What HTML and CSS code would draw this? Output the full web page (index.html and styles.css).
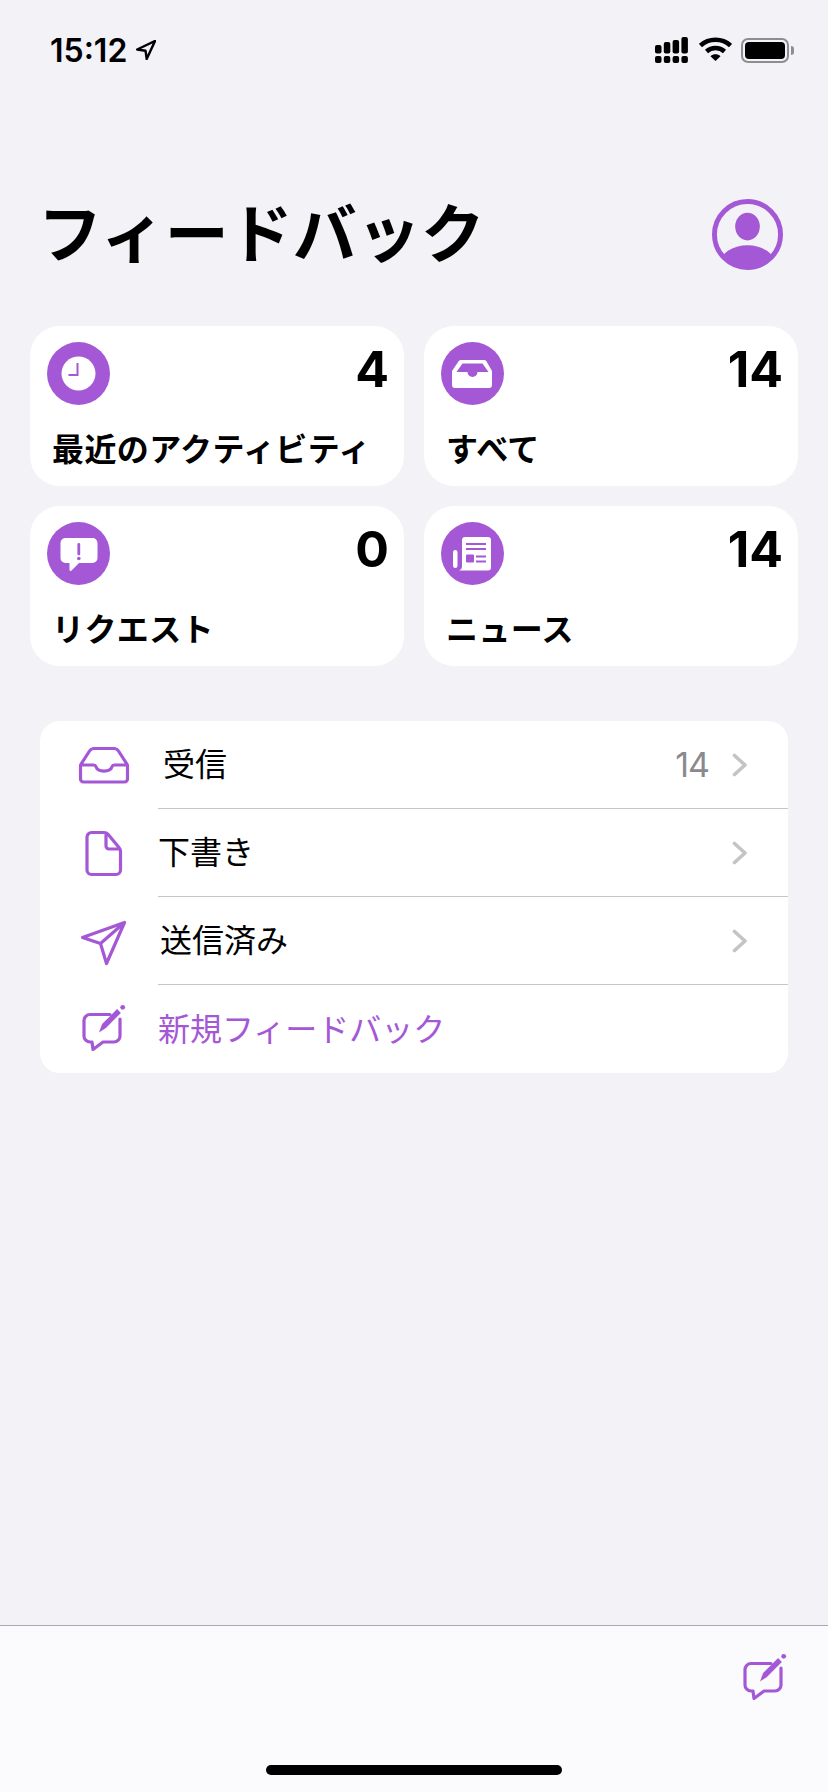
FILE: index.html
```html
<!DOCTYPE html>
<html lang="ja">
<head>
    <meta charset="UTF-8">
    <meta name="viewport" content="width=device-width, initial-scale=1.0">
    <title>フィードバック</title>
    <link rel="stylesheet" href="styles.css">
</head>
<body>
<div class="pantalla">

    <!-- Barra de estado -->
    <div class="estado">
        <div class="estado-hora">
            <span>15:12</span>
            <svg class="flecha" width="20" height="20" viewBox="0 0 20 20"><path d="M19 1 1.200 9.500l8.300 1.200 1.200 8.300z" fill="none" stroke="#000" stroke-width="2.400" stroke-linejoin="round"/></svg>
        </div>
        <div class="estado-iconos">
            <svg width="33" height="26" viewBox="0 0 33 26">
                <rect x="0" y="8" width="6.500" height="8.500" rx="2"/><rect x="8.800" y="5" width="6.500" height="11.500" rx="2"/><rect x="17.600" y="3" width="6.500" height="13.500" rx="2"/><rect x="26.400" y="0" width="6.500" height="16.500" rx="2"/>
                <rect x="0" y="19" width="6.500" height="7" rx="2"/><rect x="8.800" y="19" width="6.500" height="7" rx="2"/><rect x="17.600" y="19" width="6.500" height="7" rx="2"/><rect x="26.400" y="19" width="6.500" height="7" rx="2"/>
            </svg>
            <svg class="wifi" width="33" height="24" viewBox="0 0 33 24">
                <path d="M1.500 8.500C9.800.8 23.200.8 31.500 8.500" fill="none" stroke="#000" stroke-width="4.500"/>
                <path d="M7.500 14.500c5-4.600 13-4.600 18 0" fill="none" stroke="#000" stroke-width="4.500"/>
                <path d="M11.500 19.200c2.900-2.600 7.100-2.600 10 0l-5 4.800z"/>
            </svg>
            <div class="bateria"><div class="bateria-carga"></div></div>
            <div class="bateria-punta"></div>
        </div>
    </div>

    <!-- Encabezado -->
    <div class="cabecera">
        <h1>フィードバック</h1>
        <svg class="avatar" width="71" height="71" viewBox="0 0 72 72">
            <defs><clipPath id="recorte"><circle cx="36" cy="36" r="34"/></clipPath></defs>
            <circle cx="36" cy="36" r="33.500" fill="none" stroke="#a458d6" stroke-width="5"/>
            <ellipse cx="36" cy="28" rx="12.500" ry="14" fill="#a458d6"/>
            <ellipse cx="36" cy="66" rx="28" ry="19" fill="#a458d6" clip-path="url(#recorte)"/>
        </svg>
    </div>

    <!-- Tarjetas de resumen -->
    <div class="tarjetas">
        <div class="tarjeta">
            <div class="tarjeta-fila">
                <svg class="circulo" viewBox="0 0 63 63">
                    <circle cx="31.500" cy="31.500" r="31.500" fill="#a458d6"/>
                    <circle cx="31.500" cy="31.500" r="17" fill="#fff"/>
                    <path d="M30.500 21v12h-9" fill="none" stroke="#a458d6" stroke-width="2"/>
                </svg>
                <span class="numero">4</span>
            </div>
            <div class="tarjeta-texto">最近のアクティビティ</div>
        </div>
        <div class="tarjeta">
            <div class="tarjeta-fila">
                <svg class="circulo" viewBox="0 0 63 63">
                    <circle cx="31.500" cy="31.500" r="31.500" fill="#a458d6"/>
                    <path d="M20 18h23a3 3 0 0 1 2.400 1.200L51 29v14a3 3 0 0 1-3 3H14a3 3 0 0 1-3-3V29l6.600-9.800A3 3 0 0 1 20 18z" fill="#fff"/>
                    <path d="M21.500 21.500h20l6 8.500H36.500a5 5 0 0 1-10 0H15.500z" fill="#a458d6"/>
                </svg>
                <span class="numero">14</span>
            </div>
            <div class="tarjeta-texto">すべて</div>
        </div>
        <div class="tarjeta">
            <div class="tarjeta-fila">
                <svg class="circulo" viewBox="0 0 63 63">
                    <circle cx="31.500" cy="31.500" r="31.500" fill="#a458d6"/>
                    <path d="M18.500 16h27a5 5 0 0 1 5 5v15a5 5 0 0 1-5 5H32l-7.500 7.500c-1 1-2 .5-2-1V41h-4a5 5 0 0 1-5-5V21a5 5 0 0 1 5-5z" fill="#fff"/>
                    <path d="M31.800 22.500v9.500" stroke="#a458d6" stroke-width="2.800" stroke-linecap="round"/>
                    <circle cx="31.800" cy="36.500" r="1.800" fill="#a458d6"/>
                </svg>
                <span class="numero">0</span>
            </div>
            <div class="tarjeta-texto">リクエスト</div>
        </div>
        <div class="tarjeta">
            <div class="tarjeta-fila">
                <svg class="circulo" viewBox="0 0 63 63">
                    <circle cx="31.500" cy="31.500" r="31.500" fill="#a458d6"/>
                    <path d="M21 18a3 3 0 0 1 3-3h23a3 3 0 0 1 3 3v27.500a3 3 0 0 1-3 3H18c2-1 3-2 3-4z" fill="#fff"/>
                    <rect x="12" y="28" width="4.500" height="18" rx="2.200" fill="#fff"/>
                    <path d="M25 22h20M25 27h20M35 34.500h10M35 39.500h10" stroke="#a458d6" stroke-width="2"/>
                    <rect x="25" y="32.500" width="8" height="8" rx="1" fill="#a458d6"/>
                </svg>
                <span class="numero">14</span>
            </div>
            <div class="tarjeta-texto">ニュース</div>
        </div>
    </div>

    <!-- Lista de buzones -->
    <div class="lista">
        <div class="fila">
            <div class="fila-icono">
                <svg width="56" height="56" viewBox="0 0 56 56" class="trazo">
                    <path d="M4.500 28H18c1 0 1.600.7 2 1.800a8.200 5.500 0 0 0 16 0c.4-1.100 1-1.800 2-1.800h13.500M4.500 28v14a3 3 0 0 0 3 3h41a3 3 0 0 0 3-3V28l-9-14a5 5 0 0 0-4-2.500H17.500a5 5 0 0 0-4 2.500z"/>
                </svg>
            </div>
            <div class="fila-cuerpo">
                <span class="fila-texto fila-texto-recibido">受信</span>
                <span class="fila-cuenta">14</span>
                <svg class="chevron" width="16" height="24" viewBox="0 0 16 24"><path d="M2.500 2.500 13 12 2.500 21.500" fill="none" stroke="#c4c4c7" stroke-width="3.600" stroke-linecap="round" stroke-linejoin="round"/></svg>
            </div>
        </div>
        <div class="fila">
            <div class="fila-icono">
                <svg width="56" height="56" viewBox="0 0 56 56" class="trazo">
                    <path d="M15.500 7.500H28c2 0 3 .6 4 1.800l11 13.200c1 1.200 1.500 2.200 1.500 4V45a4.500 4.500 0 0 1-4.500 4.500H15.500A4.500 4.500 0 0 1 11 45V12a4.500 4.500 0 0 1 4.500-4.500zM30 8v13a3 3 0 0 0 3 3h11"/>
                </svg>
            </div>
            <div class="fila-cuerpo">
                <span class="fila-texto">下書き</span>
                <svg class="chevron" width="16" height="24" viewBox="0 0 16 24"><path d="M2.500 2.500 13 12 2.500 21.500" fill="none" stroke="#c4c4c7" stroke-width="3.600" stroke-linecap="round" stroke-linejoin="round"/></svg>
            </div>
        </div>
        <div class="fila">
            <div class="fila-icono">
                <svg width="56" height="56" viewBox="0 0 56 56" class="trazo">
                    <path d="M48.500 9.500 6.500 24.500l18 6 6 20zM48.500 9.500 24.500 30.500"/>
                </svg>
            </div>
            <div class="fila-cuerpo">
                <span class="fila-texto fila-texto-enviado">送信済み</span>
                <svg class="chevron" width="16" height="24" viewBox="0 0 16 24"><path d="M2.500 2.500 13 12 2.500 21.500" fill="none" stroke="#c4c4c7" stroke-width="3.600" stroke-linecap="round" stroke-linejoin="round"/></svg>
            </div>
        </div>
        <div class="fila">
            <div class="fila-icono">
                <svg width="56" height="56" viewBox="0 0 56 56" class="trazo">
                    <path d="M34 13.500H14a6 6 0 0 0-6 6V35a6 6 0 0 0 6 6h2l1 7.500L27 41h11a6 6 0 0 0 6-6V18"/>
                    <path class="pluma" d="M23 31.500 26.100 23.100 41.100 8.100 44.900 11.900 29.900 26.900z"/>
                    <circle class="pluma" cx="46.700" cy="6.300" r="2.400"/>
                </svg>
            </div>
            <div class="fila-cuerpo fila-cuerpo-ultima">
                <span class="fila-texto fila-texto-accion">新規フィードバック</span>
            </div>
        </div>
    </div>

    <!-- Barra inferior -->
    <div class="inferior">
        <svg width="56" height="56" viewBox="0 0 56 56" class="trazo">
            <path d="M34 13.500H14a6 6 0 0 0-6 6V35a6 6 0 0 0 6 6h2l1 7.500L27 41h11a6 6 0 0 0 6-6V18"/>
            <path class="pluma" d="M23 31.500 26.100 23.100 41.100 8.100 44.900 11.900 29.900 26.900z"/>
            <circle class="pluma" cx="46.700" cy="6.300" r="2.400"/>
        </svg>
        <div class="indicador"></div>
    </div>

</div>
</body>
</html>
```

FILE: styles.css
```css
/* Estilos generales */
body {
    margin: 0;
    background-color: #f2f2f7;
    color: #000;
    font-family: "Noto Sans CJK JP", "Noto Sans", sans-serif;
}
.pantalla {
    display: flex;
    flex-direction: column;
    height: 1792px;
    overflow: hidden;
}

/* Barra de estado */
.estado {
    display: flex;
    justify-content: space-between;
    align-items: center;
    height: 26px;
    padding: 37px 34px 0 50px;
}
.estado-hora {
    display: flex;
    align-items: center;
    gap: 9px;
    font-family: Inter, sans-serif;
    font-size: 32px;
    font-weight: 600;
}
.estado-iconos {
    display: flex;
    align-items: center;
}
.wifi {
    margin: 0 9px 3px 11px;
}
.bateria {
    box-sizing: border-box;
    width: 48px;
    height: 25px;
    padding: 2px;
    border: 2px solid #8e8e90;
    border-radius: 7px;
}
.bateria-carga {
    height: 100%;
    background-color: #000;
    border-radius: 4px;
}
.bateria-punta {
    width: 3px;
    height: 9px;
    margin-left: 2px;
    background-color: #8e8e90;
    border-radius: 0 3px 3px 0;
}

/* Encabezado */
.cabecera {
    display: flex;
    justify-content: space-between;
    align-items: center;
    height: 72px;
    margin-top: 135px;
    padding: 0 45px 0 38px;
}
h1 {
    margin: 0 0 10px;
    font-size: 64px;
    font-weight: 700;
    line-height: 72px;
}

/* Tarjetas de resumen */
.tarjetas {
    display: grid;
    grid-template-columns: 1fr 1fr;
    grid-auto-rows: 160px;
    gap: 20px;
    margin: 56px 30px 0;
}
.tarjeta {
    display: flex;
    flex-direction: column;
    justify-content: space-between;
    box-sizing: border-box;
    padding: 16px 15px 16px 17px;
    background-color: #fff;
    border-radius: 30px;
}
.tarjeta-fila {
    display: flex;
    justify-content: space-between;
    align-items: flex-start;
}
.circulo {
    width: 63px;
    height: 63px;
}
.numero {
    font-family: Inter, sans-serif;
    font-size: 50px;
    font-weight: 700;
    line-height: 54px;
}
.tarjeta-texto {
    padding-left: 5px;
    font-size: 32px;
    font-weight: 700;
    line-height: 46px;
    letter-spacing: 0.4px;
}

/* Lista de buzones */
.lista {
    margin: 55px 40px 0;
    background-color: #fff;
    border-radius: 20px;
    overflow: hidden;
}
.fila {
    display: flex;
    height: 88px;
}
.fila-icono {
    display: flex;
    align-items: center;
    flex-shrink: 0;
    width: 118px;
    padding-left: 36px;
    box-sizing: border-box;
}
.fila-cuerpo {
    flex: 1;
    display: flex;
    align-items: center;
    padding-right: 40px;
    border-bottom: 1px solid #c6c6c8;
}
.fila-cuerpo-ultima {
    border-bottom: none;
}
.fila-texto {
    flex: 1;
    padding-bottom: 5px;
    font-size: 32px;
    line-height: 46px;
}
.fila-texto-recibido {
    padding-left: 5px;
}
.fila-texto-enviado {
    padding-left: 2px;
}
.fila-texto-accion {
    color: #a458d6;
}
.fila-cuenta {
    margin-right: 23px;
    color: #8a8a8e;
    font-family: Inter, sans-serif;
    font-size: 34px;
    letter-spacing: -1px;
}

/* Iconos de trazo */
.trazo {
    fill: none;
    stroke: #a458d6;
    stroke-width: 3.200;
    stroke-linejoin: round;
    stroke-linecap: round;
}
.trazo .pluma {
    fill: #a458d6;
    stroke: none;
}

/* Barra inferior */
.inferior {
    position: relative;
    display: flex;
    justify-content: flex-end;
    align-items: flex-start;
    box-sizing: border-box;
    height: 167px;
    margin-top: auto;
    padding: 24px 35px 0 0;
    background-color: #fbfbfd;
    border-top: 1px solid #a9a9ae;
}
.indicador {
    position: absolute;
    left: 266px;
    bottom: 17px;
    width: 296px;
    height: 10px;
    background-color: #000;
    border-radius: 5px;
}
```
